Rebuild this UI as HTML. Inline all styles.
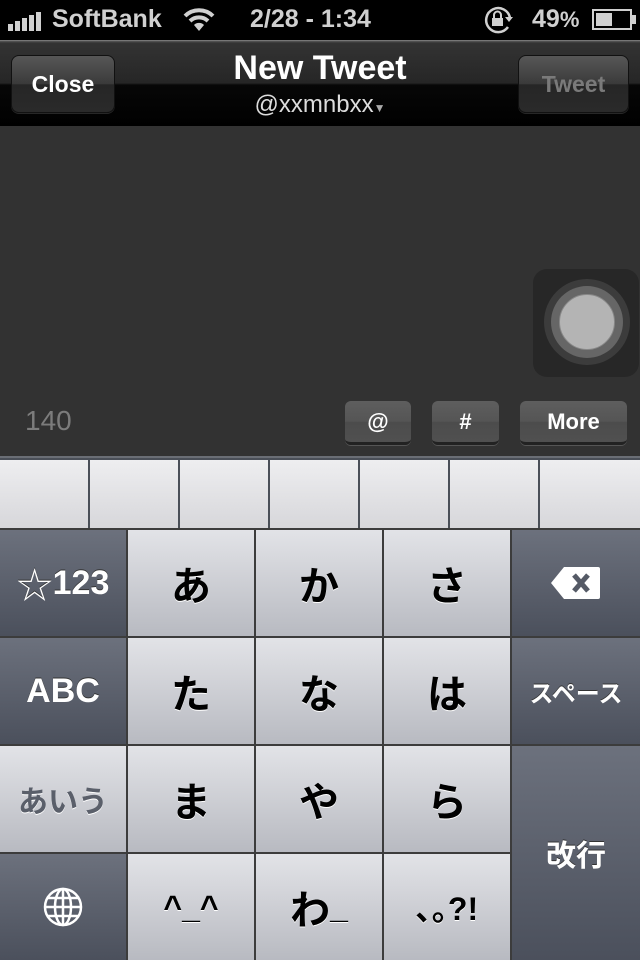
<!DOCTYPE html>
<html><head><meta charset="utf-8"><style>
*{margin:0;padding:0;box-sizing:border-box}
body{width:640px;height:960px;overflow:hidden;background:#323232;font-family:"Liberation Sans","Noto Sans CJK JP",sans-serif;position:relative}
.abs{position:absolute}
#sb{left:0;top:0;width:640px;height:40px;background:#000;color:#d0d0d0;font-weight:bold;font-size:25px}
#nav{left:0;top:40px;width:640px;height:86px;background:linear-gradient(#5a5a5a 0,#333 2px,#262626 42px,#070707 44px,#000 86px);border-top:1px solid #777}
.nb{position:absolute;top:14px;height:58px;border-radius:8px;border:1px solid #111;background:linear-gradient(#575757,#3a3a3a 50%,#262626 51%,#2a2a2a);color:#fff;font-weight:bold;font-size:23px;text-align:center;line-height:56px;box-shadow:0 1px 0 rgba(255,255,255,.15)}
.tb{position:absolute;top:401px;height:44px;border-radius:6px;background:linear-gradient(#5e5e5e,#555 50%,#4c4c4c 51%,#505050);border-bottom:3px solid #222;color:#fff;font-weight:bold;font-size:22px;text-align:center;line-height:42px;box-shadow:0 1px 0 #555}
#cand{left:0;top:456px;width:640px;height:74px;background:#4a4f58;border-top:2px solid #6a6e75}
.c{position:absolute;top:2px;height:70px;background:linear-gradient(#eeeef0,#d6d6da)}
#kb{left:0;top:528px;width:640px;height:432px;background:#3c3c3c}
.k{position:absolute;display:flex;align-items:center;justify-content:center}
.l{background:linear-gradient(#e2e3e7,#b8bac1);color:#000;font-size:40px;font-weight:bold;text-shadow:0 1px 0 #fff}
.d{background:linear-gradient(#6c717d,#4b505c);color:#fff;font-size:34px;font-weight:bold;text-shadow:0 -1px 0 #333}
</style></head><body>
<div id="sb" class="abs">
<div class="abs" style="left:8px;top:12px;display:flex;align-items:flex-end;gap:2px">
<div style="width:5px;height:7px;background:#d0d0d0"></div><div style="width:5px;height:10px;background:#d0d0d0"></div><div style="width:5px;height:13px;background:#d0d0d0"></div><div style="width:5px;height:16px;background:#d0d0d0"></div><div style="width:5px;height:19px;background:#d0d0d0"></div></div>
<div class="abs" style="left:52px;top:5px">SoftBank</div>
<svg class="abs" style="left:182px;top:6px" width="34" height="26" viewBox="0 0 34 26"><path d="M3 10 A20 20 0 0 1 31 10" stroke="#d0d0d0" stroke-width="4" fill="none"/><path d="M8 15 A13 13 0 0 1 26 15" stroke="#d0d0d0" stroke-width="4" fill="none"/><path d="M17 25 L12 19 A7 7 0 0 1 22 19 Z" fill="#d0d0d0"/></svg>
<div class="abs" style="left:250px;top:5px">2/28 - 1:34</div>
<svg class="abs" style="left:482px;top:6px" width="34" height="28" viewBox="0 0 34 28"><path d="M26 21 A12 12 0 1 1 28 12" stroke="#d0d0d0" stroke-width="2.5" fill="none"/><path d="M23 11 L31 11 L27 16Z" fill="#d0d0d0"/><rect x="10" y="12" width="11" height="8" fill="#d0d0d0"/><path d="M12 12 V9 A3.5 3.5 0 0 1 19 9 V12" stroke="#d0d0d0" stroke-width="2" fill="none"/></svg>
<div class="abs" style="left:532px;top:5px">49<span style="font-size:22px">%</span></div>
<div class="abs" style="left:592px;top:9px;width:40px;height:21px;border:2px solid #d0d0d0"><div style="margin:2px;width:16px;height:13px;background:#d0d0d0"></div></div>
<div class="abs" style="left:632px;top:15px;width:4px;height:9px;background:#d0d0d0"></div>
</div>
<div id="nav" class="abs">
<div class="nb" style="left:11px;width:104px">Close</div>
<div class="nb" style="left:518px;width:111px;color:#7a7a7a">Tweet</div>
<div class="abs" style="left:0;width:640px;top:8px;text-align:center;color:#fff;font-weight:bold;font-size:34px">New Tweet</div>
<div class="abs" style="left:0;width:640px;top:50px;text-align:center;color:#ddd;font-size:24px">@xxmnbxx<span style="font-size:12px;color:#aaa">▼</span></div>
</div>
<div class="abs" style="left:533px;top:269px;width:106px;height:108px;border-radius:14px;background:#272727"></div>
<div class="abs" style="left:544px;top:279px;width:86px;height:86px;border-radius:50%;background:#3c3c3c"></div>
<div class="abs" style="left:551px;top:286px;width:72px;height:72px;border-radius:50%;background:#666"></div>
<div class="abs" style="left:559px;top:294px;width:56px;height:56px;border-radius:50%;background:#b4b4b4;border:1px solid #888"></div>
<div class="abs" style="left:25px;top:405px;color:#7c7c7c;font-size:28px">140</div>
<div class="tb" style="left:345px;width:66px">@</div>
<div class="tb" style="left:432px;width:67px">#</div>
<div class="tb" style="left:520px;width:107px">More</div>
<div id="cand" class="abs">
<div class="c" style="left:0;width:88px"></div><div class="c" style="left:90px;width:88px"></div><div class="c" style="left:180px;width:88px"></div><div class="c" style="left:270px;width:88px"></div><div class="c" style="left:360px;width:88px"></div><div class="c" style="left:450px;width:88px"></div><div class="c" style="left:540px;width:100px"></div>
</div>
<div id="kb" class="abs">
<div class="k d" style="left:0;top:2px;width:126px;height:106px"><span style="font-weight:normal;font-size:36px">☆</span>123</div>
<div class="k l" style="left:128px;top:2px;width:126px;height:106px">あ</div>
<div class="k l" style="left:256px;top:2px;width:126px;height:106px">か</div>
<div class="k l" style="left:384px;top:2px;width:126px;height:106px">さ</div>
<div class="k d" style="left:512px;top:2px;width:128px;height:106px"><svg width="52" height="40" viewBox="0 0 52 40"><path d="M14 4 H48 A2 2 0 0 1 50 6 V34 A2 2 0 0 1 48 36 H14 L1 20Z" fill="#fff"/><path d="M24 12 L38 28 M38 12 L24 28" stroke="#555a66" stroke-width="5"/></svg></div>
<div class="k d" style="left:0;top:110px;width:126px;height:106px">ABC</div>
<div class="k l" style="left:128px;top:110px;width:126px;height:106px">た</div>
<div class="k l" style="left:256px;top:110px;width:126px;height:106px">な</div>
<div class="k l" style="left:384px;top:110px;width:126px;height:106px">は</div>
<div class="k d" style="left:512px;top:110px;width:128px;height:106px;font-size:24px">スペース</div>
<div class="k l" style="left:0;top:218px;width:126px;height:106px;font-size:30px;color:#5a5f6a">あいう</div>
<div class="k l" style="left:128px;top:218px;width:126px;height:106px">ま</div>
<div class="k l" style="left:256px;top:218px;width:126px;height:106px">や</div>
<div class="k l" style="left:384px;top:218px;width:126px;height:106px">ら</div>
<div class="k d" style="left:512px;top:218px;width:128px;height:214px;font-size:30px">改行</div>
<div class="k d" style="left:0;top:326px;width:126px;height:106px"><svg width="42" height="42" viewBox="0 0 42 42" fill="none" stroke="#fff" stroke-width="2.5"><circle cx="21" cy="21" r="18"/><ellipse cx="21" cy="21" rx="8" ry="18"/><path d="M21 3V39M3 21H39M6 12H36M6 30H36"/></svg></div>
<div class="k l" style="left:128px;top:326px;width:126px;height:106px;font-size:32px">^_^</div>
<div class="k l" style="left:256px;top:326px;width:126px;height:106px">わ<span style="font-size:32px">_</span></div>
<div class="k l" style="left:384px;top:326px;width:126px;height:106px;font-size:32px">､｡?!</div>
</div>
</body></html>
